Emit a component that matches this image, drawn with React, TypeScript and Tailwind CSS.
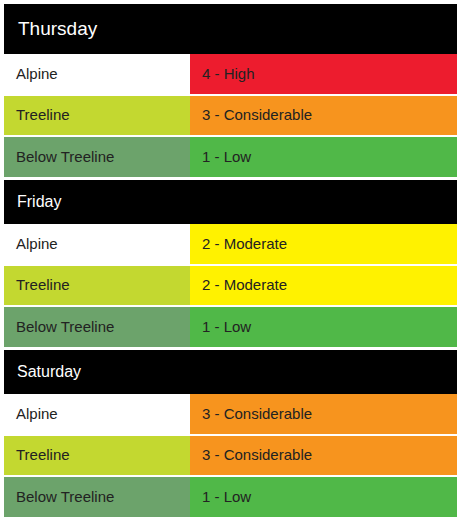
const LEVELS: Record<string, string> = {
  '1 - Low': 'bg-[#50b848]',
  '2 - Moderate': 'bg-[#fff200]',
  '3 - Considerable': 'bg-[#f7941e]',
  '4 - High': 'bg-[#ed1c2e]',
};

const BANDS = [
  { name: 'Alpine', cls: 'bg-white h-10' },
  { name: 'Treeline', cls: 'bg-[#c3d830] h-[39px]' },
  { name: 'Below Treeline', cls: 'bg-[#6ca36b] h-10' },
];

const DAYS = [
  { day: 'Thursday', ratings: ['4 - High', '3 - Considerable', '1 - Low'], big: true },
  { day: 'Friday', ratings: ['2 - Moderate', '2 - Moderate', '1 - Low'], big: false },
  { day: 'Saturday', ratings: ['3 - Considerable', '3 - Considerable', '1 - Low'], big: false },
];

function DaySection({ day, ratings, big }: { day: string; ratings: string[]; big: boolean }) {
  return (
    <div className="flex flex-col gap-[2px]">
      <div
        className={
          big
            ? 'bg-black text-white h-[50px] flex items-center pl-[14px] text-[19px] -mb-[2px]'
            : 'bg-black text-white h-[44px] flex items-center pl-[13px] text-[16px] -mb-[2px]'
        }
      >
        {day}
      </div>
      {BANDS.map((band, i) => (
        <div key={band.name} className={`flex text-[15px] text-[#222] ${band.cls}`}>
          <div className="w-[186px] flex items-center pl-3">{band.name}</div>
          <div className={`flex-1 flex items-center pl-3 ${LEVELS[ratings[i]]}`}>{ratings[i]}</div>
        </div>
      ))}
    </div>
  );
}

export default function App() {
  return (
    <div className="bg-white w-[462px] h-[522px] p-1 font-['Liberation_Sans',Arial,sans-serif]">
      <div className="w-[453px] flex flex-col gap-[3px]">
        {DAYS.map((d) => (
          <DaySection key={d.day} {...d} />
        ))}
      </div>
    </div>
  );
}
